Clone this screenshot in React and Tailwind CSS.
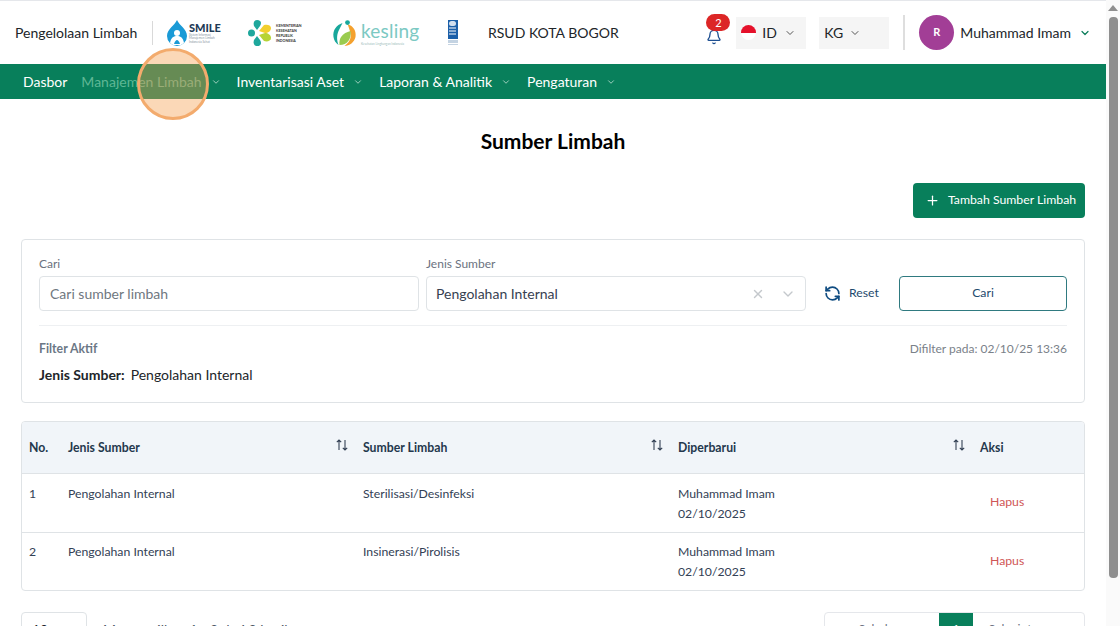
import React from 'react';
import { ChevronDown, Plus, RefreshCw, X, Bell, ArrowLeft, ArrowRight } from 'lucide-react';

const navItems = [
  { label: 'Dasbor' },
  { label: 'Manajemen Limbah', caret: true, faded: true },
  { label: 'Inventarisasi Aset', caret: true },
  { label: 'Laporan & Analitik', caret: true },
  { label: 'Pengaturan', caret: true },
];

const rows = [
  { no: 1, jenis: 'Pengolahan Internal', sumber: 'Sterilisasi/Desinfeksi' },
  { no: 2, jenis: 'Pengolahan Internal', sumber: 'Insinerasi/Pirolisis' },
];

const gridCols = 'grid grid-cols-[39px_295px_315px_302px_1fr]';

const SortIcon = () => (
  <svg width="14" height="14" viewBox="0 0 14 14" fill="none" stroke="#334155" strokeWidth="1.1" className="mt-[-6px] mr-[7px] shrink-0">
    <path d="M4 12V2M1.8 4.2 4 2l2.2 2.2M10 2v10M7.8 9.8 10 12l2.2-2.2" />
  </svg>
);

const SmileLogo = () => (
  <div className="flex items-center gap-[1px] w-[56px]">
    <svg width="22" height="26" viewBox="0 0 22 26" className="shrink-0">
      <path d="M11 0c2 5 10 9 10 16a10 10 0 0 1-20 0C1 9 9 5 11 0z" fill="#1a9ad6" />
      <circle cx="11" cy="13" r="3" fill="#fff" />
      <path d="M4 23c1-6 4-7 7-7s6 1 7 7l-3 2H7z" fill="#fff" />
      <path d="M8 24c1-3 2-4 3-4s2 1 3 4z" fill="#1a9ad6" />
    </svg>
    <div className="flex flex-col">
      <span className="text-[11px] leading-[13px] font-black text-[#1f3b57]">SMILE</span>
      <span className="text-[3px] leading-[3.5px] text-[#8a96a3] whitespace-nowrap">Sistem Informasi<br />Manajemen Limbah<br />Indonesia Sehat</span>
    </div>
  </div>
);

const KemenkesLogo = () => (
  <div className="flex items-center gap-[4px] w-[56px]">
    <svg width="24" height="26" viewBox="0 0 24 26" className="shrink-0">
      <circle cx="3.5" cy="13" r="3.5" fill="#1ea79c" />
      <path d="M9 0c4 0 5 3 3 6L9 10 6 6C5 3 6 0 9 0z" fill="#1ea79c" />
      <path d="M9 26c4 0 5-3 3-6l-3-4-3 4c-1 3 0 6 3 6z" fill="#1ea79c" />
      <path d="M11 11 16 5c3-1 7 0 7 3s-3 5-6 5z" fill="#f2cf2e" />
      <path d="M11 15l5 6c3 1 7 0 7-3s-3-5-6-5z" fill="#b6d335" />
    </svg>
    <span className="text-[3.6px] leading-[5px] font-bold text-[#333] whitespace-nowrap">KEMENTERIAN<br />KESEHATAN<br />REPUBLIK<br />INDONESIA</span>
  </div>
);

const KeslingLogo = () => (
  <div className="flex items-center gap-[4px] w-[88px]">
    <svg width="25" height="26" viewBox="0 0 24 26" className="shrink-0">
      <path d="M15 4c6 2 9 7 8 13-1 5-6 9-11 9 4-3 7-7 6-12-.4-4-2-7-3-10z" fill="#f4a12e" />
      <path d="M10 3C4 5 0 10 1 17c.5 3 2 6 5 8-2-5-2-11 1-16 1-2 2-4 3-6z" fill="#18a79b" />
      <path d="M7 25c-1-7 3-12 11-14 1 8-3 14-11 14z" fill="#9acb4f" />
      <circle cx="15" cy="2.6" r="2.4" fill="#18a79b" />
    </svg>
    <div className="flex flex-col items-start">
      <span className="text-[19px] leading-[24px] text-[#7cc9c3] tracking-[0.2px]">kesling</span>
      <span className="text-[3px] leading-[3px] text-[#9bbcb9] whitespace-nowrap">Kesehatan Lingkungan Indonesia</span>
    </div>
  </div>
);

const UndpLogo = () => (
  <div className="flex flex-col items-center w-[11px]">
    <div className="w-[10px] h-[19px] bg-[#1c5fa8] flex flex-col items-center pt-[1px] gap-[1px]">
      <span className="w-[7px] h-[5px] rounded-full bg-white/80" />
      <span className="w-[7px] h-[2px] bg-white/50" />
      <span className="w-[7px] h-[2px] bg-white/50" />
      <span className="w-[7px] h-[2px] bg-white/50" />
    </div>
    <div className="w-[10px] h-[3px] mt-[1px] bg-[#c4d3e2]" />
    <div className="w-[10px] h-[1px] mt-[1px] bg-[#c4d3e2]" />
  </div>
);

const Header = () => (
  <header className="h-[64px] border-t border-[#e5e7eb] bg-white flex items-center pl-[15px] pr-[15px] text-[#212529]">
    <span className="text-[14px] w-[122px] whitespace-nowrap">Pengelolaan Limbah</span>
    <div className="w-px h-[24px] bg-[#d9d9d9] ml-[15px] mr-[13px]" />
    <SmileLogo />
    <div className="ml-[26px]"><KemenkesLogo /></div>
    <div className="ml-[28px]"><KeslingLogo /></div>
    <div className="ml-[27px]"><UndpLogo /></div>
    <span className="ml-[30px] text-[14px] whitespace-nowrap">RSUD KOTA BOGOR</span>

    <div className="ml-auto flex items-center">
      <div className="relative w-[16px] h-[24px] flex items-end justify-center mr-[14px]">
        <Bell size={16} className="text-[#1e4f91]" strokeWidth={2} />
        <span className="absolute top-[-7px] left-0 w-[24px] h-[17px] rounded-full bg-[#dc2626] text-white text-[11px] leading-[17px] text-center">2</span>
      </div>
      <div className="w-[70px] h-[32px] bg-[#f5f5f5] flex items-center pl-[5px] text-[14px]">
        <span className="w-[15px] h-[15px] rounded-full overflow-hidden flex flex-col shrink-0">
          <span className="h-1/2 bg-[#e5112b]" />
          <span className="h-1/2 bg-white" />
        </span>
        <span className="ml-[6px]">ID</span>
        <ChevronDown size={12} className="ml-[7px] text-[#555]" />
      </div>
      <div className="w-[70px] h-[32px] bg-[#f5f5f5] flex items-center pl-[5px] ml-[13px] text-[14px]">
        <span>KG</span>
        <ChevronDown size={12} className="ml-[6px] text-[#555]" />
      </div>
      <div className="w-[2px] h-[35px] bg-[#dedede] ml-[14px] mr-[14px]" />
      <div className="w-[35px] h-[35px] rounded-full bg-[#a23e96] text-white text-[11px] font-bold flex items-center justify-center">R</div>
      <span className="ml-[6px] text-[14px] whitespace-nowrap">Muhammad Imam</span>
      <ChevronDown size={12} className="ml-[8px] text-[#0b7d5a]" strokeWidth={2.4} />
    </div>
  </header>
);

const Nav = () => (
  <nav className="h-[35px] bg-[#087f5b] flex items-center pl-[23px] text-white text-[14px]">
    {navItems.map((item) => (
      <div key={item.label} className={`flex items-center ${item.caret ? 'mr-[16px]' : 'mr-[14px]'}`}>
        <span className={`whitespace-nowrap ${item.faded ? 'text-[#5fb795]' : ''}`}>{item.label}</span>
        {item.caret && <ChevronDown size={10} className="ml-[9px] text-[#b9ddd0]" strokeWidth={2} />}
      </div>
    ))}
  </nav>
);

const FilterCard = () => (
  <section className="mt-[21px] h-[164px] border border-[#dfe3e6] rounded-[4px] px-[17px] pt-[16px]">
    <div className="flex items-end">
      <label className="w-[380px]">
        <span className="block text-[12px] leading-[16px] text-[#6b7280] mb-[4px]">Cari</span>
        <div className="h-[35px] border border-[#dfe3e6] rounded-[4px] flex items-center px-[10px] text-[14px] text-[#6f7780]">Cari sumber limbah</div>
      </label>
      <label className="w-[380px] ml-[7px]">
        <span className="block text-[12px] leading-[16px] text-[#6b7280] mb-[4px]">Jenis Sumber</span>
        <div className="h-[35px] border border-[#dfe3e6] rounded-[4px] flex items-center pl-[9px] pr-[9px] text-[14px] text-[#374151]">
          <span>Pengolahan Internal</span>
          <X size={14} className="ml-auto text-[#c4c8cc]" strokeWidth={2.4} />
          <ChevronDown size={16} className="ml-[15px] text-[#c4c8cc]" />
        </div>
      </label>
      <div className="w-[73px] ml-[18px] h-[35px] flex items-center text-[#1e4a6d] text-[12.25px]">
        <RefreshCw size={17} strokeWidth={2.4} className="text-[#0f4c81] -scale-x-100" />
        <span className="ml-[8px]">Reset</span>
      </div>
      <button className="ml-[2px] w-[168px] h-[35px] border border-[#2f7a80] rounded-[4px] text-[12.25px] text-[#1e4a6d] bg-white">Cari</button>
    </div>
    <div className="h-px bg-[#eef0f2] mt-[14px]" />
    <div className="flex justify-between items-center mt-[15px]">
      <span className="text-[12.25px] leading-[16px] font-bold text-[#6b7785]">Filter Aktif</span>
      <span className="text-[12px] leading-[16px] text-[#7a8189]">Difilter pada: 02/10/25 13:36</span>
    </div>
    <div className="mt-[8px] text-[14px] leading-[20px] text-[#212529]">
      <span className="font-bold">Jenis Sumber:</span>
      <span className="ml-[6px]">Pengolahan Internal</span>
    </div>
  </section>
);

const DataTable = () => (
  <section className="mt-[18px] h-[170px] border border-[#dfe3e6] rounded-[4px] overflow-hidden text-[12.25px] text-[#334155]">
    <div className={`${gridCols} h-[52px] pt-[1px] bg-[#f1f5f9] border-b border-[#dfe3e6] items-center font-bold text-[#24384d]`}>
      <span className="pl-[7px]">No.</span>
      <div className="pl-[7px] flex justify-between items-center"><span>Jenis Sumber</span><SortIcon /></div>
      <div className="pl-[7px] flex justify-between items-center"><span>Sumber Limbah</span><SortIcon /></div>
      <div className="pl-[7px] flex justify-between items-center"><span>Diperbarui</span><SortIcon /></div>
      <span className="pl-[7px]">Aksi</span>
    </div>
    {rows.map((row, i) => (
      <div key={row.no} className={`${gridCols} h-[59px] items-start leading-[20px] ${i === 0 ? 'pt-[10px] border-b border-[#dfe3e6]' : 'pt-[9px]'}`}>
        <span className="pl-[7px]">{row.no}</span>
        <span className="pl-[7px]">{row.jenis}</span>
        <span className="pl-[7px]">{row.sumber}</span>
        <div className="pl-[7px]">
          <div>Muhammad Imam</div>
          <div>02/10/2025</div>
        </div>
        <span className={`pl-[17px] text-[#cf5656] ${i === 0 ? 'mt-[8px]' : 'mt-[9px]'}`}>Hapus</span>
      </div>
    ))}
  </section>
);

const Pagination = () => (
  <section className="mt-[21px] flex justify-between items-start text-[12.25px] text-[#4b5563]">
    <div className="flex items-start">
      <div className="w-[66px] h-[35px] border border-[#dfe3e6] rounded-[4px] flex items-center justify-between px-[10px] text-[14px] text-[#212529]">
        <span>10</span>
        <ChevronDown size={14} className="text-[#9ca3af]" />
      </div>
      <span className="ml-[16px] mt-[7px] text-[14px]">Menampilkan 1 - 2 dari 2 hasil</span>
    </div>
    <div className="w-[261px] h-[35px] border border-[#e5e7eb] rounded-[4px] flex items-stretch overflow-hidden">
      <div className="w-[114px] flex items-center justify-center gap-[6px] text-[#6b7280]"><ArrowLeft size={12} />Sebelumnya</div>
      <div className="w-[34px] bg-[#087f5b] text-white flex items-center justify-center">1</div>
      <div className="flex-1 flex items-center justify-center gap-[6px] text-[#6b7280]">Selanjutnya<ArrowRight size={12} /></div>
    </div>
  </section>
);

const Scrollbar = () => (
  <div className="w-[14px] h-full bg-[#fafafa] flex flex-col items-center shrink-0">
    <div className="mt-[5px] w-0 h-0 border-x-[5px] border-x-transparent border-b-[6px] border-b-[#8f8f8f]" />
    <div className="mt-[6px] w-[9px] h-[561px] rounded-[4px] bg-[#8f8f8f]" />
  </div>
);

export default function App() {
  return (
    <div className="h-[626px] w-[1120px] overflow-hidden flex bg-white font-['Lato',sans-serif]">
      <div className="relative w-[1106px] h-full overflow-hidden">
        <Header />
        <Nav />
        <main className="px-[21px]">
          <h1 className="mt-[28px] text-center text-[21px] leading-[28px] font-bold text-black">Sumber Limbah</h1>
          <div className="flex justify-end mt-[28px]">
            <button className="w-[172px] h-[35px] rounded-[4px] bg-[#087f5b] text-white text-[12.25px] flex items-center pl-[12px] whitespace-nowrap">
              <Plus size={15} strokeWidth={2} />
              <span className="ml-[8px]">Tambah Sumber Limbah</span>
            </button>
          </div>
          <FilterCard />
          <DataTable />
          <Pagination />
        </main>
        {/* click marker */}
        <div className="absolute left-[137px] top-[48px] w-[72px] h-[72px] rounded-full bg-[#f59e4c]/40 border-[3px] border-[#f3ab6d]" />
      </div>
      <Scrollbar />
    </div>
  );
}
